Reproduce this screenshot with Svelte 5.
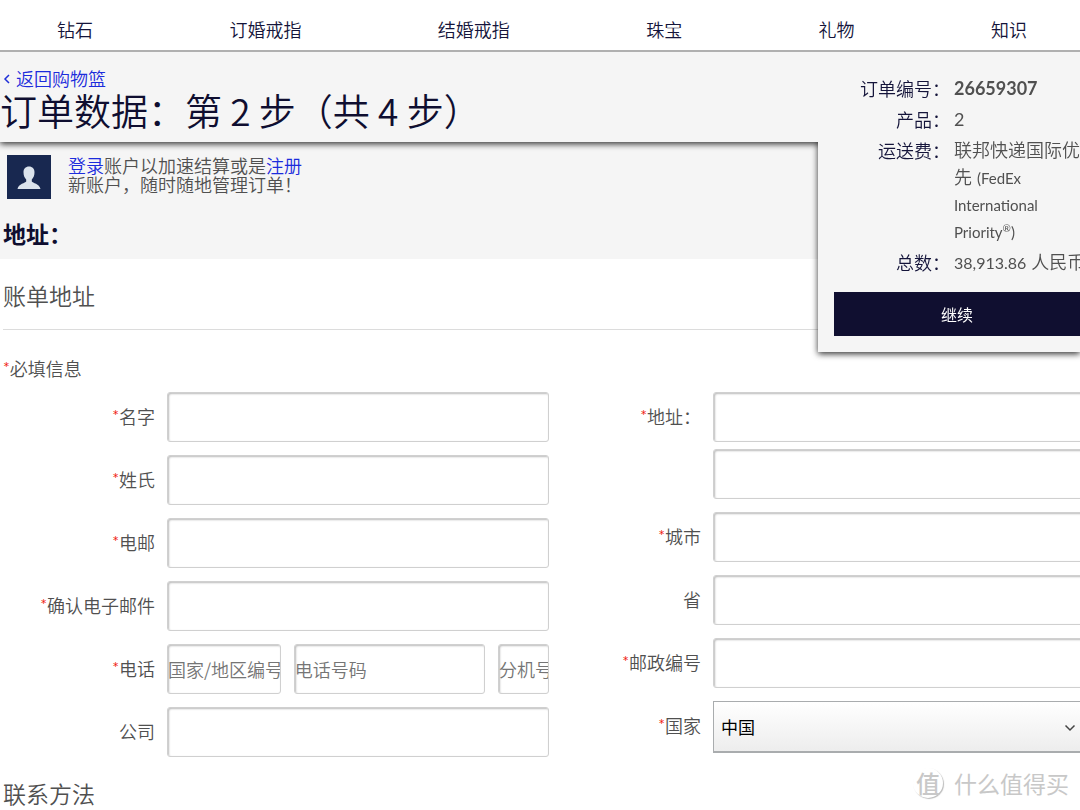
<script>
  const navItems = ["钻石", "订婚戒指", "结婚戒指", "珠宝", "礼物", "知识"];

  const leftFields = [
    { id: "firstName", label: "名字", required: true },
    { id: "lastName", label: "姓氏", required: true },
    { id: "email", label: "电邮", required: true, type: "email" },
    { id: "confirmEmail", label: "确认电子邮件", required: true, type: "email" },
  ];

  const rightFields = [
    { id: "city", label: "城市", required: true },
    { id: "province", label: "省", required: false },
    { id: "postcode", label: "邮政编号", required: true },
  ];

  let values = $state({});
  let country = $state("CN");
</script>

<div class="page">
  <nav>
    {#each navItems as item}
      <a href="#nav">{item}</a>
    {/each}
  </nav>

  <header>
    <a class="back" href="#basket">
      <svg width="8" height="12" viewBox="0 0 8 12"><path d="M6 2 2 6l4 4" /></svg>
      返回购物篮
    </a>
    <h1>订单数据：第 2 步（共 4 步）</h1>

    <aside>
      <dl>
        <dt>订单编号：</dt>
        <dd><b>26659307</b></dd>
        <dt>产品：</dt>
        <dd><span class="count">2</span></dd>
        <dt>运送费：</dt>
        <dd>联邦快递国际优先 <span class="carrier">(FedEx International Priority<sup>®</sup>)</span></dd>
        <dt>总数：</dt>
        <dd class="total"><span class="amount">38,913.86</span> 人民币</dd>
      </dl>
      <button type="button">继续</button>
    </aside>
  </header>

  <section class="account">
    <div class="signin">
      <svg class="avatar" width="44" height="44" viewBox="0 0 44 44">
        <rect width="44" height="44" fill="#182850" />
        <path
          fill="#dbe3ec"
          d="M22 11.5c-3.400 0-5.500 2.300-5.500 5.700 0 3 1 5.700 2.700 7.200v2.100c-.7 1.500-7.700 2.200-8.700 7.500h23c-1-5.300-8-6-8.700-7.500v-2.100c1.700-1.500 2.700-4.200 2.700-7.200 0-3.400-2.100-5.700-5.500-5.700z"
        />
      </svg>
      <p>
        <a href="#login">登录</a>账户以加速结算或是<a href="#register">注册</a><br />
        新账户，随时随地管理订单！
      </p>
    </div>
    <h2>地址：</h2>
  </section>

  <form>
    <h3 class="ruled">账单地址</h3>
    <p class="note"><i>*</i>必填信息</p>

    <div class="columns">
      <div class="column">
        {#each leftFields as field}
          <div class="row">
            <label for={field.id}>{#if field.required}<i>*</i>{/if}{field.label}</label>
            <input id={field.id} type={field.type ?? "text"} bind:value={values[field.id]} />
          </div>
        {/each}
        <div class="row">
          <label for="phone"><i>*</i>电话</label>
          <div class="phone">
            <input class="code" type="text" aria-label="国家/地区编号" placeholder="国家/地区编号" />
            <input class="number" id="phone" type="text" placeholder="电话号码" />
            <input class="ext" type="text" aria-label="分机号" placeholder="分机号" />
          </div>
        </div>
        <div class="row">
          <label for="company">公司</label>
          <input id="company" type="text" bind:value={values.company} />
        </div>
      </div>

      <div class="column">
        <div class="row">
          <label for="address1"><i>*</i>地址：</label>
          <div class="address">
            <input id="address1" type="text" bind:value={values.address1} />
            <input type="text" aria-label="地址" bind:value={values.address2} />
          </div>
        </div>
        {#each rightFields as field}
          <div class="row">
            <label for={field.id}>{#if field.required}<i>*</i>{/if}{field.label}</label>
            <input id={field.id} type="text" bind:value={values[field.id]} />
          </div>
        {/each}
        <div class="row">
          <label for="country"><i>*</i>国家</label>
          <div class="select">
            <select id="country" bind:value={country}>
              <option value="CN">中国</option>
            </select>
            <svg width="12" height="8" viewBox="0 0 12 8"><path d="m1.500 1.500 4.500 4.500 4.500-4.500" /></svg>
          </div>
        </div>
      </div>
    </div>

    <h3>联系方法</h3>
  </form>

  <div class="watermark">
    <span class="seal">值</span>
    <span>什么值得买</span>
  </div>
</div>

<style>
  :global(body) {
    margin: 0;
    background: #fff;
  }

  .page {
    position: relative;
    overflow: hidden;
    color: #505050;
    font-family: "Noto Sans CJK SC", sans-serif;
    font-size: 18px;
    font-weight: 350;
    line-height: 27px;
  }

  .page * {
    box-sizing: border-box;
  }

  a {
    color: #1c2cdc;
    text-decoration: none;
  }

  h1,
  h2,
  h3,
  p,
  dl,
  dd {
    margin: 0;
  }

  i {
    color: #f01e14;
    font-family: Lato, sans-serif;
    font-size: 16px;
    font-style: normal;
    font-weight: 400;
    line-height: 1;
    vertical-align: 3px;
  }

  nav {
    position: relative;
    z-index: 2;
    display: flex;
    justify-content: space-between;
    padding: 16px 53px 7px 57px;
    border-bottom: 2px solid #b0b0b0;
    background: #fff;
  }

  nav a {
    color: #14143a;
  }

  /* One shadow follows the outline of the bar and the summary together */
  header {
    position: relative;
    z-index: 1;
    height: 90px;
    padding-top: 13px;
    background: #f5f5f5;
    filter: drop-shadow(0 2px 3px rgba(0, 0, 0, 0.8));
  }

  .back {
    display: flex;
    align-items: center;
    gap: 5px;
    width: max-content;
    padding-left: 3px;
  }

  .back path,
  .select path {
    fill: none;
    stroke: #1f2fd8;
    stroke-width: 1.5;
  }

  h1 {
    color: #0f0e30;
    font-size: 37px;
    font-weight: 350;
    line-height: 36px;
  }

  aside {
    position: absolute;
    top: 0;
    right: 0;
    width: 262px;
    padding: 23px 0 16px 16px;
    background: #f5f5f5;
  }

  dl {
    display: grid;
    grid-template-columns: 116px 1fr;
    gap: 4px;
    margin-bottom: 16px;
  }

  dt {
    color: #14143a;
    text-align: right;
  }

  dd {
    font-family: Lato, "Noto Sans CJK SC", sans-serif;
  }

  b {
    font-weight: 700;
  }

  .total {
    white-space: nowrap;
  }

  .count,
  .carrier,
  .amount {
    font-weight: 400;
    line-height: 1;
  }

  .carrier {
    font-size: 15px;
  }

  .amount {
    font-size: 16px;
  }

  sup {
    font-size: 10px;
    line-height: 0;
  }

  aside button {
    width: 100%;
    height: 44px;
    border: 0;
    background: #100f30;
    color: #fff;
    font: 400 16px "Noto Sans CJK SC", sans-serif;
  }

  .account {
    padding: 13px 3px 11px;
    background: #f5f5f5;
  }

  .signin {
    display: flex;
    gap: 17px;
    padding-left: 4px;
    line-height: 19px;
  }

  .avatar {
    flex: none;
  }

  .signin p {
    margin-top: 1px;
  }

  h2 {
    margin-top: 19px;
    color: #0f0e30;
    font-size: 23px;
    font-weight: 700;
    line-height: 30px;
  }

  form {
    padding-left: 3px;
  }

  h3 {
    padding: 19px 0 17px;
    font-size: 23px;
    font-weight: 350;
    line-height: 34px;
  }

  .ruled {
    border-bottom: 1px solid #dcdcdc;
  }

  .note {
    margin: 25px 0 10px;
  }

  .columns {
    display: grid;
    grid-template-columns: 1fr 1fr;
    margin-right: -15px;
  }

  .column {
    display: flex;
    flex-direction: column;
    gap: 13px;
  }

  .row {
    display: grid;
    grid-template-columns: 152px 1fr;
    column-gap: 12px;
  }

  label {
    padding-top: 11px;
    text-align: right;
  }

  input {
    width: 100%;
    min-width: 0;
    height: 50px;
    padding: 0;
    border: 1px solid #d0d0d0;
    border-radius: 3px;
    background: #fff;
    box-shadow: inset 1px 1px 2px #bbb;
    font: inherit;
    color: inherit;
  }

  input::placeholder {
    color: #757575;
    opacity: 1;
  }

  .phone {
    display: flex;
    gap: 13px;
  }

  .code {
    flex: 114;
  }

  .number {
    flex: 193;
  }

  .ext {
    flex: 50;
  }

  .address {
    display: grid;
    gap: 7px;
  }

  .select {
    position: relative;
  }

  select {
    width: 100%;
    height: 52px;
    padding: 0 7px;
    appearance: none;
    border: 1px solid #a9acae;
    border-bottom-width: 2px;
    border-radius: 0;
    background: linear-gradient(#fff, #ededed);
    color: #000;
    font: 400 17px "Noto Sans CJK SC", sans-serif;
  }

  .select svg {
    position: absolute;
    top: 23px;
    right: 19px;
    pointer-events: none;
  }

  .select path {
    stroke: #444;
  }

  .watermark {
    position: absolute;
    right: 11px;
    top: 767px;
    display: flex;
    align-items: center;
    gap: 11px;
    color: #c8c8c8;
    font-size: 23px;
    font-weight: 400;
    line-height: 32px;
  }

  .seal {
    width: 30px;
    border-radius: 50%;
    box-shadow: 1px 1px 1px #bbb;
    font-size: 24px;
    font-weight: 500;
    line-height: 30px;
    text-align: center;
  }
</style>
